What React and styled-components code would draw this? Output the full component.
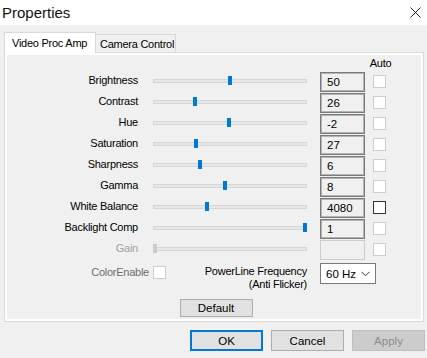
import React from "react";
import styled, { createGlobalStyle } from "styled-components";

const GlobalStyle = createGlobalStyle`
  html, body { margin: 0; padding: 0; background: #f0f0f0; }
  body {
    font-family: "Liberation Sans", Arial, sans-serif;
    font-size: 11px;
    color: #000;
  }
  * { box-sizing: border-box; }
`;

const Dialog = styled.div`
  width: 427px;
  height: 358px;
  background: #f0f0f0;
  overflow: hidden;
  display: flex;
  flex-direction: column;
  letter-spacing: -0.25px;
`;

const TitleBar = styled.div`
  height: 25px;
  flex: none;
  background: #fff;
  display: flex;
  align-items: center;
  justify-content: space-between;
  padding: 0 6px 0 2px;
`;

const Title = styled.span`
  font-size: 15px;
  letter-spacing: 0;
  color: #111;
  margin-top: -1px;
`;

const TabStrip = styled.div`
  margin-top: 7px;
  height: 21px;
  flex: none;
  display: flex;
  align-items: flex-end;
  padding-left: 4px;
  position: relative;
  z-index: 1;
`;

const Tab = styled.div`
  display: flex;
  align-items: center;
  width: ${(p) => (p.$active ? "92px" : "80px")};
  height: ${(p) => (p.$active ? "21px" : "19px")};
  padding-left: ${(p) => (p.$active ? "7px" : "4px")};
  background: ${(p) => (p.$active ? "#fff" : "#f0f0f0")};
  border: 1px solid #d9d9d9;
  border-left: ${(p) => (p.$active ? "1px solid #d9d9d9" : "none")};
  border-bottom: ${(p) => (p.$active ? "none" : "1px solid #d9d9d9")};
  white-space: nowrap;
`;

const Panel = styled.div`
  margin: -1px 3px 0 4px;
  height: 270px;
  flex: none;
  border: 1px solid #d9d9d9;
  background: #fff;
  padding: 2px;
`;

const Page = styled.div`
  height: 100%;
  background: #f0f0f0;
  display: flex;
  flex-direction: column;
`;

const HeaderRow = styled.div`
  height: 17px;
  display: flex;
  align-items: center;
  padding-left: 359px;
  padding-bottom: 1px;
`;

const AutoHead = styled.span`
  width: 29px;
  text-align: center;
`;

const Row = styled.div`
  height: 21px;
  display: flex;
  align-items: center;
`;

const Label = styled.span`
  width: 131px;
  text-align: right;
  padding-bottom: 4px;
  line-height: 13px;
  color: ${(p) => (p.$disabled ? "#a0a0a0" : "#000")};
  white-space: nowrap;
`;

const Track = styled.div`
  position: relative;
  margin-left: 15px;
  margin-bottom: 3px;
  width: 154px;
  height: 4px;
  border: 1px solid #d6d6d6;
  background: #e7e7e7;
`;

const Thumb = styled.div`
  position: absolute;
  top: -4px;
  width: 4px;
  height: 9px;
  background: ${(p) => (p.$disabled ? "#cccccc" : "#0078d7")};
`;

const ValueBox = styled.div`
  align-self: flex-start;
  margin-left: 13px;
  width: 45px;
  height: 20px;
  border: 1px solid ${(p) => (p.$disabled ? "#cccccc" : "#7a7a7a")};
  box-shadow: ${(p) => (p.$disabled ? "none" : "inset 0 0 0 1px #b4b4b4")};
  background: #f0f0f0;
  padding-left: 6px;
  display: flex;
  align-items: center;
  font-size: 11.5px;
  letter-spacing: 0;
`;

const Check = styled.span`
  display: inline-block;
  flex: none;
  width: 13px;
  height: 13px;
  margin-left: ${(p) => p.$ml || 0}px;
  margin-bottom: ${(p) => p.$mb || 0}px;
  background: #fff;
  border: 1px solid ${(p) => (p.$enabled ? "#333333" : "#cccccc")};
`;

const BottomRow = styled.div`
  margin-top: 2px;
  height: 30px;
  display: flex;
  align-items: flex-start;
`;

const ColorGroup = styled.div`
  width: 159px;
  height: 18px;
  display: flex;
  justify-content: flex-end;
  align-items: center;
  gap: 4px;
  color: #6d6d6d;
`;

const PowerText = styled.div`
  width: 141px;
  text-align: right;
  line-height: 13px;
  padding-top: 2px;
  white-space: nowrap;
`;

const Select = styled.div`
  margin-left: 13px;
  width: 56px;
  height: 21px;
  border: 1px solid #7a7a7a;
  background: #fff;
  display: flex;
  align-items: center;
  justify-content: space-between;
  padding: 0 5px 0 5px;
  font-size: 11.5px;
  letter-spacing: 0;
`;

const DefaultWrap = styled.div`
  margin-top: 6px;
  display: flex;
  justify-content: center;
  padding-left: 4px;
`;

const Button = styled.div`
  width: 73px;
  height: ${(p) => p.$h || 21}px;
  display: flex;
  align-items: center;
  justify-content: center;
  background: ${(p) => (p.$disabled ? "#cccccc" : "#e1e1e1")};
  border: ${(p) =>
    p.$primary ? "2px solid #0078d7" : p.$disabled ? "1px solid #bfbfbf" : "1px solid #adadad"};
  color: ${(p) => (p.$disabled ? "#8c8c8c" : "#000")};
  font-size: 11.5px;
  letter-spacing: 0;
`;

const Footer = styled.div`
  margin-top: 8px;
  display: flex;
  justify-content: flex-end;
  gap: 8px;
  padding-right: 2px;
`;

const controls = [
  { name: "Brightness", value: "50", pos: 75 },
  { name: "Contrast", value: "26", pos: 40 },
  { name: "Hue", value: "-2", pos: 74 },
  { name: "Saturation", value: "27", pos: 41 },
  { name: "Sharpness", value: "6", pos: 45 },
  { name: "Gamma", value: "8", pos: 70 },
  { name: "White Balance", value: "4080", pos: 52, auto: true },
  { name: "Backlight Comp", value: "1", pos: 150 },
  { name: "Gain", value: "", pos: 0, disabled: true },
];

function CloseIcon() {
  return (
    <svg width="11" height="11" viewBox="0 0 11 11">
      <path d="M0.5 0.5 L10.5 10.5 M10.5 0.5 L0.5 10.5" stroke="#222" strokeWidth="1" />
    </svg>
  );
}

function Chevron() {
  return (
    <svg width="9" height="6" viewBox="0 0 9 6">
      <path d="M0.5 0.8 L4.5 4.8 L8.5 0.8" stroke="#333" strokeWidth="1" fill="none" />
    </svg>
  );
}

export default function App() {
  return (
    <>
      <GlobalStyle />
      <Dialog>
        <TitleBar>
          <Title>Properties</Title>
          <CloseIcon />
        </TitleBar>
        <TabStrip>
          <Tab $active>Video Proc Amp</Tab>
          <Tab>Camera Control</Tab>
        </TabStrip>
        <Panel>
          <Page>
            <HeaderRow>
              <AutoHead>Auto</AutoHead>
            </HeaderRow>
            {controls.map((c) => (
              <Row key={c.name}>
                <Label $disabled={c.disabled}>{c.name}</Label>
                <Track>
                  <Thumb $disabled={c.disabled} style={{ left: c.pos - 1 }} />
                </Track>
                <ValueBox $disabled={c.disabled}>{c.value}</ValueBox>
                <Check $ml={8} $mb={2} $enabled={c.auto} />
              </Row>
            ))}
            <BottomRow>
              <ColorGroup>
                <span>ColorEnable</span>
                <Check />
              </ColorGroup>
              <PowerText>
                PowerLine Frequency
                <br />
                (Anti Flicker)
              </PowerText>
              <Select>
                <span>60 Hz</span>
                <Chevron />
              </Select>
            </BottomRow>
            <DefaultWrap>
              <Button $h={18}>Default</Button>
            </DefaultWrap>
          </Page>
        </Panel>
        <Footer>
          <Button $primary>OK</Button>
          <Button>Cancel</Button>
          <Button $disabled>Apply</Button>
        </Footer>
      </Dialog>
    </>
  );
}
